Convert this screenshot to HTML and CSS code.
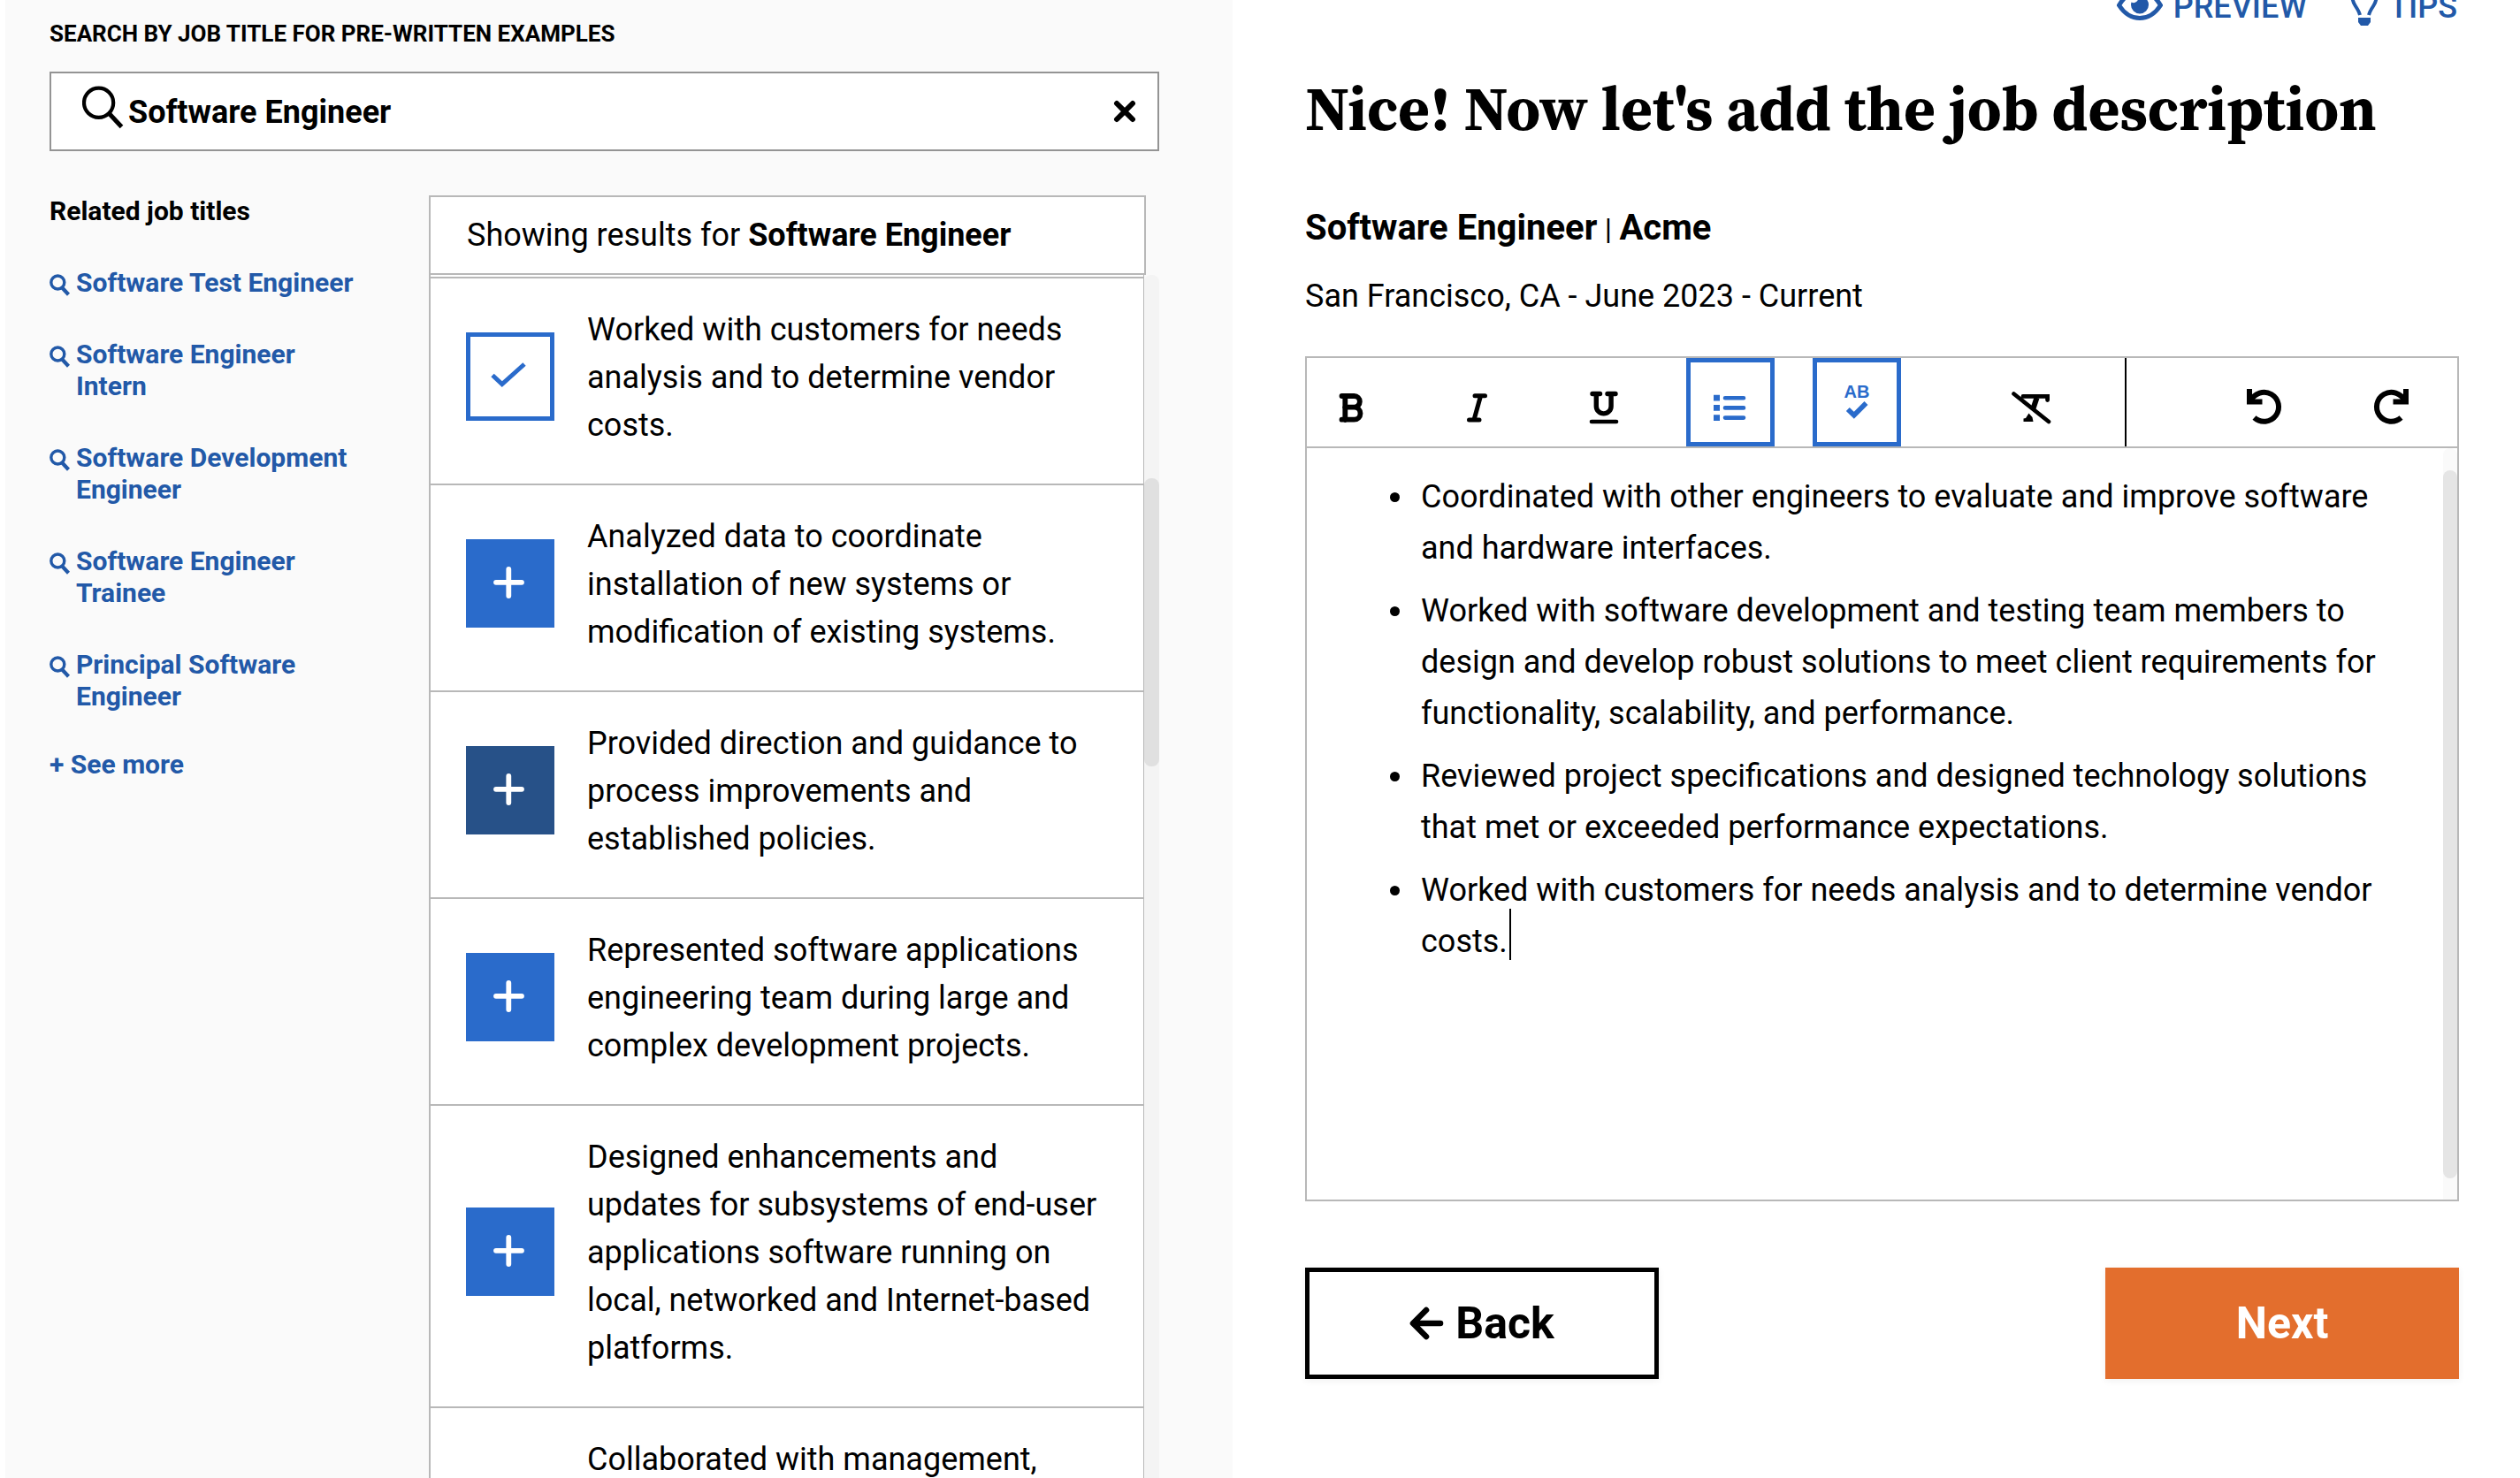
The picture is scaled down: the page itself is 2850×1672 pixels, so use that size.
FILE: index.html
```html
<!DOCTYPE html>
<html lang="en">
<head>
<meta charset="utf-8">
<title>Job description</title>
<link rel="stylesheet" href="styles.css">
</head>
<body>
<svg class="defs" aria-hidden="true">
  <symbol id="i-search" viewBox="0 0 24 36"><circle cx="9.300" cy="17.500" r="7.500" stroke-width="3.400"/><path d="M14.500 23.700l7 7.500" stroke-width="4.200"/></symbol>
  <symbol id="i-plus" viewBox="0 0 100 100"><path d="M48.300 34v30M34 48.800h29" stroke-width="5.800" stroke-linecap="round"/></symbol>
  <symbol id="i-check" viewBox="0 0 100 100"><path d="M30 48.500l10.800 10L66 36" stroke-width="5"/></symbol>
  <symbol id="i-undo" viewBox="0 0 100 100"><path d="M33 35v14.500h14.500" stroke-width="6"/><path d="M34.500 48.500A16.500 16.500 0 1 1 38.500 67.500" stroke-width="6"/></symbol>
</svg>
<div class="app">
  <section class="examples">
    <label class="search-label" for="job-search">SEARCH BY JOB TITLE FOR PRE-WRITTEN EXAMPLES</label>
    <div class="search">
      <svg class="search-icon" viewBox="0 0 48 56"><circle cx="18.600" cy="23.300" r="16.600" stroke-width="4.200"/><path d="M30.500 35.500l14 15" stroke-width="5"/></svg>
      <input id="job-search" type="text" value="Software Engineer">
      <button class="clear" type="button" aria-label="Clear"><svg viewBox="0 0 26 26"><path d="M4 4l18 18M22 4L4 22" stroke-width="6" stroke-linecap="round"/></svg></button>
    </div>
    <div class="columns">
      <nav class="related">
        <h2>Related job titles</h2>
        <ul>
          <li><a href="#"><svg><use href="#i-search"/></svg><span>Software Test Engineer</span></a></li>
          <li><a href="#"><svg><use href="#i-search"/></svg><span>Software Engineer Intern</span></a></li>
          <li><a href="#"><svg><use href="#i-search"/></svg><span>Software Development Engineer</span></a></li>
          <li><a href="#"><svg><use href="#i-search"/></svg><span>Software Engineer Trainee</span></a></li>
          <li><a href="#"><svg><use href="#i-search"/></svg><span>Principal Software Engineer</span></a></li>
        </ul>
        <a class="more" href="#">+ See more</a>
      </nav>
      <div class="results">
        <p class="results-head">Showing results for <strong>Software Engineer</strong></p>
        <div class="results-body">
          <ul class="result-list">
            <li><button class="add added" type="button" aria-label="Added"><svg><use href="#i-check"/></svg></button><p>Worked with customers for needs analysis and to determine vendor costs.</p></li>
            <li><button class="add" type="button" aria-label="Add"><svg><use href="#i-plus"/></svg></button><p>Analyzed data to coordinate installation of new systems or modification of existing systems.</p></li>
            <li><button class="add focus" type="button" aria-label="Add"><svg><use href="#i-plus"/></svg></button><p>Provided direction and guidance to process improvements and established policies.</p></li>
            <li><button class="add" type="button" aria-label="Add"><svg><use href="#i-plus"/></svg></button><p>Represented software applications engineering team during large and complex development projects.</p></li>
            <li><button class="add" type="button" aria-label="Add"><svg><use href="#i-plus"/></svg></button><p>Designed enhancements and updates for subsystems of end-user applications software running on local, networked and Internet-based platforms.</p></li>
            <li class="last"><p>Collaborated with management,</p></li>
          </ul>
          <div class="track"><div class="thumb"></div></div>
        </div>
      </div>
    </div>
  </section>

  <main class="editor-pane">
    <nav class="links">
      <a href="#"><svg class="eye" viewBox="0 0 52 42"><path d="M2.500 19Q12 3 26 3T49.500 19Q40 33.500 26 33.500T2.500 19z" stroke-width="5"/><path class="solid" d="M26 8.500a10 10 0 1 1-10 10q0-1.500.5-3a5 5 0 0 0 7-6.500z"/></svg>PREVIEW</a>
      <a href="#"><svg class="bulb" viewBox="0 0 32 42"><path d="M11 30Q10 26 6 20Q2 14 2.500 8A13.500 13.500 0 0 1 29.500 8Q30 14 26 20Q22 26 21 30" stroke-width="4"/><path class="solid" d="M9 33h14v5l-3 4h-8l-3-4z"/></svg>TIPS</a>
    </nav>
    <h1>Nice! Now let's add the job description</h1>
    <h2 class="role">Software Engineer<span> | </span>Acme</h2>
    <p class="place">San Francisco, CA - June 2023 - Current</p>
    <div class="editor">
      <div class="toolbar">
        <button type="button" aria-label="Bold"><svg viewBox="0 0 100 100"><path d="M39.500 43H53.500a6.300 6.300 0 0 1 0 12.700H43M53.500 55.700a7 7 0 0 1 0 14H39.500M43.300 43v27" stroke-width="5.800" stroke-linecap="round"/></svg></button>
        <button type="button" aria-label="Italic"><svg viewBox="0 0 100 100"><path d="M47 42.700h11.500M40.500 70h11.500M53.500 43l-7.500 27" stroke-width="5" stroke-linecap="round"/></svg></button>
        <button type="button" aria-label="Underline"><svg viewBox="0 0 100 100"><path d="M37 40.500h8.500M54 40.500h9M41.300 40.500v14a8.400 8.400 0 0 0 16.800 0v-14" stroke-width="5.400" stroke-linecap="round"/><path d="M36 72h28" stroke-width="4.600" stroke-linecap="round"/></svg></button>
        <button class="on" type="button" aria-label="Bulleted list"><svg viewBox="0 0 100 100"><path d="M31 45.200h7M31 56.400h7M31 67.600h7" stroke-width="6.800"/><path d="M44 45.200h21M44 56.400h21M44 67.600h21" stroke-width="4.600" stroke-linecap="round"/></svg></button>
        <button class="on" type="button" aria-label="Spell check"><svg viewBox="0 0 100 100"><text x="50" y="45" text-anchor="middle">AB</text><path d="M39.800 58l7 6.800L60.500 51" stroke-width="5.600"/></svg></button>
        <button class="clear-format" type="button" aria-label="Clear formatting"><svg viewBox="0 0 100 100"><path d="M29.500 40.500l39.500 31.500" stroke-width="4.600" stroke-linecap="round"/><path d="M40 43.400h27.600v4.200" stroke-width="4.800" stroke-linecap="round"/><path d="M55.500 45l-4 12" stroke-width="6"/><path class="solid" d="M43 68l3.500-5.500 4 4.500 1 5H40.500v-3.500z"/></svg></button>
        <span class="divider"></span>
        <button class="undo" type="button" aria-label="Undo"><svg><use href="#i-undo"/></svg></button>
        <button class="redo" type="button" aria-label="Redo"><svg><use href="#i-undo"/></svg></button>
      </div>
      <div class="editor-body">
        <ul class="text" role="textbox" aria-multiline="true" aria-label="Job description">
          <li>Coordinated with other engineers to evaluate and improve software and hardware interfaces.</li>
          <li>Worked with software development and testing team members to design and develop robust solutions to meet client requirements for functionality, scalability, and performance.</li>
          <li>Reviewed project specifications and designed technology solutions that met or exceeded performance expectations.</li>
          <li>Worked with customers for needs analysis and to determine vendor costs.<span class="caret"></span></li>
        </ul>
        <div class="track"><div class="thumb"></div></div>
      </div>
    </div>
    <div class="actions">
      <button class="back" type="button"><svg viewBox="0 0 40 40"><path d="M19 5L4 20l15 15M5 20h30" stroke-width="6.600" stroke-linecap="round" stroke-linejoin="round"/></svg>Back</button>
      <button class="next" type="button">Next</button>
    </div>
  </main>
</div>
</body>
</html>
```
FILE: styles.css
```css
* { box-sizing: border-box; }

body, h1, h2, p, ul { margin: 0; padding: 0; }

body {
  background: #fff;
  color: #000;
  font: 400 36px/54px Roboto, "Liberation Sans", sans-serif;
}

ul { list-style: none; }
a { color: #2259a8; text-decoration: none; }
button, input { border: 0; padding: 0; background: none; color: inherit; font: inherit; }
svg { display: block; fill: none; stroke: currentColor; }
.solid { fill: currentColor; stroke: none; }
.defs { position: absolute; width: 0; height: 0; }

.app {
  display: grid;
  grid-template-columns: minmax(0, 347fr) minmax(0, 364fr);
  height: 100vh;
  padding-left: 6px;
  overflow: hidden;
}

/* Examples panel */
.examples {
  display: flex;
  flex-direction: column;
  min-height: 0;
  padding: 23px 83px 0 50px;
  background: #fafafa;
}

.search-label { font-size: 26px; line-height: 30px; font-weight: 700; }

.search {
  display: flex;
  flex: none;
  align-items: center;
  gap: 4px;
  height: 90px;
  margin-top: 28px;
  padding: 0 24px 0 35px;
  border: 2px solid #949494;
  background: #fff;
}

.search-icon { flex: none; width: 48px; height: 56px; margin-bottom: 10px; }
.search input { flex: 1; min-width: 0; height: 56px; padding-top: 2px; font-weight: 700; outline: 0; }
.clear svg { width: 26px; height: 26px; }

.columns {
  display: grid;
  grid-template-columns: 429px minmax(0, 1fr);
  flex: 1;
  min-height: 0;
  margin-top: 50px;
}

.related { font-size: 30px; line-height: 36px; font-weight: 700; }
.related h2 { font-size: 30px; font-weight: 700; }
.related li { margin-top: 45px; }
.related li a { display: flex; gap: 6px; padding-right: 80px; }
.related svg { flex: none; width: 24px; height: 36px; }
.more { display: block; margin-top: 41px; }

.results { display: flex; flex-direction: column; min-height: 0; }

.results-head {
  flex: none;
  height: 90px;
  margin-right: 15px;
  padding: 16px 41px;
  border: 2px solid #b8b8b8;
  background: #fff;
}

.results-body { display: flex; flex: 1; min-height: 0; }

.result-list {
  flex: 1;
  padding-top: 2px;
  border: solid #b8b8b8;
  border-width: 0 1px 0 2px;
  background: #fff;
  overflow: hidden;
}

.result-list li {
  display: flex;
  align-items: center;
  gap: 37px;
  padding: 31px 40px 39px;
  border-top: 2px solid #b8b8b8;
}

.result-list .last { padding-left: 177px; }

.add { flex: none; width: 100px; height: 100px; margin-bottom: 2px; background: #2a6bcb; color: #fff; }
.add svg { width: 100px; height: 100px; }
.focus { background: #275188; }
.added { background: #fff; color: #2a6bcb; box-shadow: inset 0 0 0 5px #2a6bcb; }

.track { flex: none; width: 16px; border-radius: 8px 8px 0 0; }
.thumb { border-radius: 8px; }
.results .track { width: 17px; background: #f4f4f4; }
.results .thumb { height: 326px; margin-top: 230px; background: #e0e0e0; }

/* Editor pane */
.editor-pane { padding: 0 69px 0 82px; }

.links {
  display: flex;
  justify-content: flex-end;
  gap: 49px;
  margin-top: -13px;
  padding-right: 2px;
  font-weight: 500;
  line-height: 42px;
}

.links a { display: flex; gap: 12px; }
.eye { width: 52px; height: 42px; }
.bulb { width: 32px; height: 42px; }

h1 {
  margin-top: 52px;
  font: 700 69px/84px "Source Serif Pro", "Source Serif 4", "Liberation Serif", serif;
}

.role { margin-top: 69px; font-size: 40px; line-height: 48px; font-weight: 700; }
.role span { font-size: 34px; font-weight: 400; }
.place { margin-top: 25px; }

.editor { margin-top: 41px; border: 2px solid #b8b8b8; }

.toolbar {
  display: flex;
  gap: 43px;
  height: 102px;
  border-bottom: 2px solid #b8b8b8;
}

.toolbar button { flex: none; width: 100px; height: 100px; }
.toolbar svg { width: 100px; height: 100px; }
.toolbar .on { color: #2a6bcb; box-shadow: inset 0 0 0 5px #2a6bcb; }
.toolbar text { fill: currentColor; stroke: none; font: 700 20px "Liberation Sans", sans-serif; }
.toolbar .clear-format { margin-left: 55px; }
.divider { width: 2px; margin-left: 12px; background: #000; }
.toolbar .undo { margin-left: auto; }
.toolbar .redo { margin-right: 25px; transform: scaleX(-1); }

.editor-body { display: flex; min-height: 850px; }
.text { flex: 1; padding: 26px 60px 26px 123px; line-height: 58px; list-style: disc; }
.text li { margin-bottom: 13px; padding-left: 6px; }
.caret { position: absolute; width: 2px; height: 58px; margin: -8px 0 0 2px; background: #000; }
.editor .track { display: flex; padding: 25px 0 24px; background: #fafafa; }
.editor .thumb { flex: 1; background: #e5e5e5; }

.actions {
  display: flex;
  justify-content: space-between;
  margin-top: 75px;
  font-size: 50px;
  font-weight: 700;
}

.actions button {
  display: flex;
  align-items: center;
  justify-content: center;
  gap: 12px;
  width: 400px;
  height: 126px;
  box-shadow: 0 2px 8px rgba(0, 0, 0, 0.06);
}

.actions svg { width: 40px; height: 40px; }
.actions .back { border: 5px solid #000; }
.actions .next { background: #e36e2d; color: #fff; }
```
